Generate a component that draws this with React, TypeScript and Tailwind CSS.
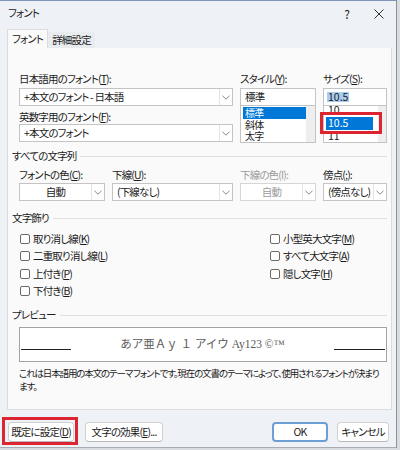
import React from 'react';

const ui = "font-['Noto_Sans_CJK_JP','Noto_Sans',sans-serif] [font-feature-settings:'palt']";

function Chevron() {
  return (
    <svg width="8" height="5" viewBox="0 0 8 5" fill="none">
      <path d="M0.5 0.8 L4 4.2 L7.5 0.8" stroke="#7a7a7a" strokeWidth="0.9" />
    </svg>
  );
}

function Key({ k }: { k: string }) {
  return <span className="underline underline-offset-[1px]">{k}</span>;
}

interface ComboProps {
  width: string;
  text: string;
  center?: boolean;
  disabled?: boolean;
}

function Combo({ width, text, center, disabled }: ComboProps) {
  return (
    <div className={`${width} h-[18px] border ${disabled ? 'border-[#d6d6d6]' : 'border-[#c4c4c4]'} bg-white flex items-stretch`}>
      <div
        className={`flex-1 flex items-center px-[4px] leading-none whitespace-nowrap overflow-hidden ${center ? 'justify-center' : ''} ${disabled ? 'text-[#9b9b9b]' : ''}`}
      >
        {text}
      </div>
      <div className="w-[13px] border-l border-[#e4e4e4] flex items-center justify-center">
        <Chevron />
      </div>
    </div>
  );
}

function Group({ title }: { title: string }) {
  return (
    <div className="-ml-[7px] h-[14px] flex items-center">
      <span className="leading-none">{title}</span>
      <div className="flex-1 h-px bg-[#e0e0e0] ml-[4px]" />
    </div>
  );
}

function Check({ label, k }: { label: string; k: string }) {
  return (
    <div className="h-[17.5px] flex items-center gap-[3px] pl-[1px]">
      <div className="w-[10px] h-[10px] rounded-[2px] border border-[#6a6a6a] bg-white" />
      <span className="leading-none whitespace-nowrap">
        {label}(<Key k={k} />)
      </span>
    </div>
  );
}

const btn =
  'h-[20px] rounded-[4px] border border-[#d0d0d0] border-b-[#b8b8b8] bg-white flex items-center justify-center leading-none whitespace-nowrap';

export default function App() {
  return (
    <div className={`w-[400px] h-[450px] bg-[#d9dce0] overflow-hidden ${ui} text-[10.5px] tracking-[-0.08em] text-[#1b1b1b]`}>
      <div className="w-[397px] h-[448px] bg-[#eef1f5] border-t border-t-[#7f97b9] border-r border-r-[#8d9198] border-b border-b-[#a9adb3] flex flex-col">
        {/* title bar */}
        <div className="h-[25px] flex items-center pl-[8px] pr-[12px]">
          <span className="leading-none">フォント</span>
          <div className="flex-1" />
          <span className="text-[12px] leading-none mr-[25px]">?</span>
          <svg width="10" height="10" viewBox="0 0 10 10">
            <path d="M0.5 0.5 L9.5 9.5 M9.5 0.5 L0.5 9.5" stroke="#333" strokeWidth="1" />
          </svg>
        </div>

        {/* tabs */}
        <div className="h-[19px] mt-[3px] pl-[7px] flex items-end">
          <div className="w-[41px] h-[19px] bg-[#fafafa] border border-b-0 border-[#dcdcdc] flex items-center justify-center leading-none">
            フォント
          </div>
          <div className="w-[47px] h-[16px] bg-[#e9ecef] flex items-center justify-center leading-none">
            詳細設定
          </div>
        </div>

        {/* panel */}
        <div className="ml-[7px] w-[385px] h-[362px] border border-t-0 border-[#dcdcdc] bg-[#fafafa] pl-[11px] pr-[4px] pt-[24px]">
          <div className="flex gap-[7px]">
            <div className="w-[214px] flex flex-col">
              <div className="h-[14px] flex items-center leading-none">
                日本語用のフォント(<Key k="T" />):
              </div>
              <div className="mt-[2px]">
                <Combo width="w-[214px]" text="+本文のフォント - 日本語" />
              </div>
              <div className="h-[14px] mt-[4px] flex items-center leading-none">
                英数字用のフォント(<Key k="F" />):
              </div>
              <Combo width="w-[214px]" text="+本文のフォント" />
            </div>

            <div className="w-[76px] flex flex-col">
              <div className="h-[14px] flex items-center leading-none">
                スタイル(<Key k="Y" />):
              </div>
              <div className="mt-[2px] h-[18px] border border-[#c4c4c4] bg-white flex items-center px-[4px] leading-none">
                標準
              </div>
              <div className="h-[37px] border border-t-0 border-[#c4c4c4] bg-white flex text-[10px]">
                <div className="flex-1 pt-[1px] pl-[2px] flex flex-col">
                  <div className="h-[12px] bg-[#0078d7] text-white flex items-center px-[2px] leading-none">標準</div>
                  <div className="h-[12px] flex items-center px-[2px] leading-none">斜体</div>
                  <div className="h-[12px] flex items-center px-[2px] leading-none">太字</div>
                </div>
                <div className="w-[9px] bg-[#eeeeee]" />
              </div>
            </div>

            <div className="w-[64px] flex flex-col relative">
              <div className="h-[14px] flex items-center leading-none">
                サイズ(<Key k="S" />):
              </div>
              <div className="mt-[2px] h-[18px] border border-[#c4c4c4] bg-white flex items-center px-[3px] leading-none">
                <span className="bg-[#a9cdf0] px-[1px] tracking-normal">10.5</span>
              </div>
              <div className="h-[37px] border border-t-0 border-[#c4c4c4] bg-white flex overflow-hidden tracking-normal">
                <div className="flex-1 -mt-[2px] pl-[2px] flex flex-col">
                  <div className="h-[13px] shrink-0 flex items-center px-[2px] leading-none">10</div>
                  <div className="h-[13px] shrink-0 w-[47px] bg-[#0078d7] text-white flex items-center px-[2px] leading-none">10.5</div>
                  <div className="h-[13px] shrink-0 flex items-center px-[2px] leading-none">11</div>
                </div>
                <div className="w-[8px] bg-[#eeeeee]" />
              </div>
              {/* annotation */}
              <div className="absolute -left-[3px] top-[40px] w-[62px] h-[22px] border-[3px] border-[#dc2530]" />
            </div>
          </div>

          <div className="mt-[6px]">
            <Group title="すべての文字列" />
          </div>

          <div className="mt-[5px] flex gap-[7px]">
            <div className="w-[86px]">
              <div className="h-[14px] flex items-center leading-none whitespace-nowrap">
                フォントの色(<Key k="C" />):
              </div>
              <div className="mt-[1px]">
                <Combo width="w-[86px]" text="自動" center />
              </div>
            </div>
            <div className="w-[121px]">
              <div className="h-[14px] flex items-center leading-none">
                下線(<Key k="U" />):
              </div>
              <div className="mt-[1px]">
                <Combo width="w-[121px]" text="(下線なし)" />
              </div>
            </div>
            <div className="w-[76px]">
              <div className="h-[14px] flex items-center leading-none text-[#9b9b9b] whitespace-nowrap">下線の色(I):</div>
              <div className="mt-[1px]">
                <Combo width="w-[76px]" text="自動" center disabled />
              </div>
            </div>
            <div className="w-[64px]">
              <div className="h-[14px] flex items-center leading-none">
                傍点(<Key k=";" />):
              </div>
              <div className="mt-[1px]">
                <Combo width="w-[64px]" text="(傍点なし)" />
              </div>
            </div>
          </div>

          <div className="mt-[10px]">
            <Group title="文字飾り" />
          </div>

          <div className="mt-[5px] grid grid-cols-[250px_1fr]">
            <div className="flex flex-col">
              <Check label="取り消し線" k="K" />
              <Check label="二重取り消し線" k="L" />
              <Check label="上付き" k="P" />
              <Check label="下付き" k="B" />
            </div>
            <div className="flex flex-col">
              <Check label="小型英大文字" k="M" />
              <Check label="すべて大文字" k="A" />
              <Check label="隠し文字" k="H" />
            </div>
          </div>

          <div className="mt-[8px]">
            <Group title="プレビュー" />
          </div>

          <div className="mt-[5px] w-[368px] h-[35px] border border-[#a3a3a3] bg-white flex items-center">
            <div className="self-end mb-[11px] ml-[1px] w-[50px] h-px bg-[#222]" />
            <div className="flex-1 text-center font-['Liberation_Serif','Noto_Sans_CJK_JP',serif] [font-feature-settings:normal] tracking-normal text-[11.5px] text-[#5a5a5a] leading-none whitespace-nowrap">
              あア亜Ａｙ １ アイウ Ay123 ©™
            </div>
            <div className="self-end mb-[11px] mr-[1px] w-[51px] h-px bg-[#222]" />
          </div>

          <div className="mt-[5px] text-[9.5px] tracking-[-0.12em] leading-[12.5px] whitespace-nowrap">
            これは日本語用の本文のテーマ フォントです。現在の文書のテーマによって、使用されるフォントが決まり
            <br />
            ます。
          </div>
        </div>

        {/* buttons */}
        <div className="mt-[12px] flex items-center pr-[7px]">
          <div className="relative ml-[8px]">
            <div className={`w-[66px] ${btn}`}>
              既定に設定(<Key k="D" />)
            </div>
            <div className="absolute -left-[6px] -right-[4px] -top-[5px] -bottom-[3px] border-[3px] border-[#dc2530]" />
          </div>
          <div className={`ml-[11px] w-[78px] ${btn}`}>
            文字の効果(<Key k="E" />)...
          </div>
          <div className="flex-1" />
          <div className="w-[56px] h-[20px] rounded-[4px] border-2 border-[#6c9fd4] bg-white flex items-center justify-center leading-none">
            OK
          </div>
          <div className={`ml-[9px] w-[52px] ${btn}`}>
            キャンセル
          </div>
        </div>
      </div>
    </div>
  );
}
